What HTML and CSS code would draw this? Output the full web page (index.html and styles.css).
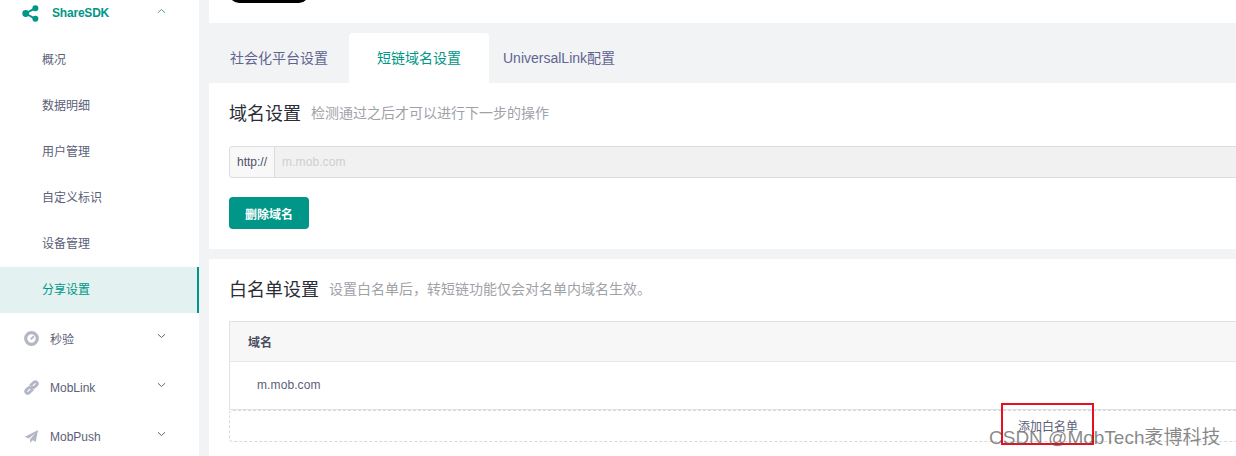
FILE: index.html
```html
<!DOCTYPE html>
<html lang="zh-CN">
<head>
<meta charset="utf-8">
<title>分享设置</title>
<link rel="stylesheet" href="styles.css">
</head>
<body>
<div class="app">
  <aside class="sidebar">
    <div class="group-head current">
      <svg class="gicon lead" viewBox="0 0 16 16"><path d="M12.500 3 3.500 8l9 5" fill="none" stroke="#009688" stroke-width="1.800"/><circle cx="3.500" cy="8" r="3.200" fill="#009688"/><circle cx="12.600" cy="3" r="2.800" fill="#009688"/><circle cx="12.600" cy="13" r="2.800" fill="#009688"/></svg>
      <span class="gname">ShareSDK</span>
      <svg class="chev" viewBox="0 0 10 6"><path d="M1 5 5 1.300 9 5" fill="none" stroke="#4a9d92" stroke-width="1.100"/></svg>
    </div>
    <a class="sub">概况</a>
    <a class="sub">数据明细</a>
    <a class="sub">用户管理</a>
    <a class="sub">自定义标识</a>
    <a class="sub">设备管理</a>
    <a class="sub active">分享设置</a>
    <div class="group">
      <svg class="gicon" viewBox="0 0 16 16"><circle cx="8" cy="8" r="6.200" fill="none" stroke="#b3b6c4" stroke-width="3.400"/><path d="M7.200 8.800 10.600 5.600" stroke="#b3b6c4" stroke-width="2"/></svg>
      <span class="gname-plain">秒验</span>
      <svg class="chev" viewBox="0 0 10 6"><path d="M1 1 5 4.700 9 1" fill="none" stroke="#5d6275" stroke-width="1.100"/></svg>
    </div>
    <div class="group latin">
      <svg class="gicon" viewBox="0 0 16 16"><path d="M6.500 7 2.500 10.500a2 2 0 0 0 3 3L9.500 9.800M9.500 9 13.500 5.500a2 2 0 0 0-3-3L6.500 6.200M6.500 9.500 9.500 6.500" fill="none" stroke="#b3b6c4" stroke-width="3"/></svg>
      <span class="gname-plain">MobLink</span>
      <svg class="chev" viewBox="0 0 10 6"><path d="M1 1 5 4.700 9 1" fill="none" stroke="#5d6275" stroke-width="1.100"/></svg>
    </div>
    <div class="group latin">
      <svg class="gicon" viewBox="0 0 16 16"><path d="M15 1 1 8.200l4 1.800L12 4.500 6.500 11v4l2.600-3 3.400 1.500z" fill="#b3b6c4"/></svg>
      <span class="gname-plain">MobPush</span>
      <svg class="chev" viewBox="0 0 10 6"><path d="M1 1 5 4.700 9 1" fill="none" stroke="#5d6275" stroke-width="1.100"/></svg>
    </div>
  </aside>
  <main class="main">
    <section class="top-card"><div class="black-btn"></div></section>
    <nav class="tabs">
      <a class="tab first">社会化平台设置</a>
      <a class="tab on">短链域名设置</a>
      <a class="tab last">UniversalLink配置</a>
    </nav>
    <section class="card domain">
      <div class="heading"><h2>域名设置</h2><p>检测通过之后才可以进行下一步的操作</p></div>
      <div class="input-group"><span class="prefix">http://</span><span class="field">m.mob.com</span></div>
      <button class="btn">删除域名</button>
    </section>
    <section class="card white">
      <div class="heading"><h2>白名单设置</h2><p>设置白名单后，转短链功能仅会对名单内域名生效。</p></div>
      <div class="table">
        <div class="th">域名</div>
        <div class="td">m.mob.com</div>
      </div>
      <div class="add">添加白名单</div>
    </section>
  </main>
</div>
<div class="redbox"></div>
<div class="watermark">CSDN @MobTech袤博科技</div>
</body>
</html>
```
FILE: styles.css
```css
* { box-sizing: border-box; }
html, body { margin: 0; height: 456px; overflow: hidden; }
body { font-family: "Liberation Sans", "Noto Sans CJK SC", sans-serif; font-size: 12px; color: #5b6078; background: #f2f3f5; position: relative; }
.app { display: flex; height: 456px; gap: 10px; }
.sidebar { width: 199px; flex: none; background: #fff; height: 456px; overflow: hidden; }
.group-head { display: flex; align-items: center; height: 26px; margin-bottom: 11px; padding-left: 22px; padding-right: 33px; }
.group { display: flex; align-items: center; height: 49px; padding-top: 1px; padding-left: 24px; padding-right: 33px; }
.gicon { width: 15px; height: 15px; flex: none; margin-right: 11px; }
.gicon.lead { width: 17px; height: 17px; margin-right: 13px; }
.gname { flex: 1; font-weight: 700; color: #009688; letter-spacing: -.2px; }
.gname-plain { flex: 1; color: #5b6078; }
.latin .gname-plain { padding-top: 2px; }
.chev { width: 9px; height: 6px; flex: none; margin-top: -4px; }
.sub { display: flex; align-items: center; height: 46px; padding-left: 42px; padding-bottom: 4px; color: #5b6078; }
.sub.active { background: #e3f2f0; color: #009688; border-right: 2px solid #009688; }
.main { flex: 1; min-width: 0; overflow: hidden; height: 456px; }
.top-card { height: 23px; background: #fff; padding-left: 20px; overflow: hidden; }
.black-btn { width: 80px; height: 32px; margin-top: -29px; background: #000; border-radius: 10px; }
.tabs { display: flex; height: 60px; align-items: flex-end; }
.tab { display: flex; align-items: center; justify-content: center; height: 50px; padding-bottom: 2px; font-size: 14px; color: #5f6590; }
.tab.first { width: 140px; }
.tab.on { width: 140px; background: #fff; color: #009688; border-radius: 4px 4px 0 0; }
.tab.last { padding-left: 14px; }
.card { background: #fff; padding-left: 20px; margin-right: -20px; }
.domain { height: 166px; margin-bottom: 10px; padding-top: 19px; }
.white { height: 197px; padding-top: 19px; }
.heading { display: flex; align-items: center; height: 20px; gap: 10px; }
.heading h2 { margin: 0; font-size: 18px; font-weight: 400; color: #2b2d36; }
.heading p { margin: 0; font-size: 14px; color: #a0a2a8; }
.input-group { display: flex; height: 32px; margin-top: 24px; border: 1px solid #dcdde3; border-radius: 4px; border-right: 0; }
.prefix { width: 45px; flex: none; display: flex; align-items: center; justify-content: center; background: #f8f8f8; border-right: 1px solid #dcdde3; border-radius: 4px 0 0 4px; color: #4d5068; }
.field { flex: 1; display: flex; align-items: center; padding-left: 7px; background: #f1f1f1; color: #cfcfcf; letter-spacing: .1px; }
.btn { display: block; width: 80px; height: 32px; margin-top: 19px; border: 0; padding: 0; border-radius: 4px; background: #009688; color: #fff; font: 700 12px "Liberation Sans", "Noto Sans CJK SC", sans-serif; }
.table { margin-top: 23px; height: 89px; border: 1px solid #e1e1e3; border-right: 0; }
.th { height: 40px; display: flex; align-items: center; padding-left: 18px; background: #f7f7f7; border-bottom: 1px solid #e8e8e8; font-weight: 700; color: #4a4d5e; }
.td { height: 47px; display: flex; align-items: center; padding-left: 27px; padding-bottom: 2px; letter-spacing: .1px; }
.add { height: 32px; border: 1px dashed #d9d9dd; border-right: 0; border-radius: 4px; display: flex; align-items: center; padding-left: 788px; padding-bottom: 2px; color: #5b6078; }
.redbox { position: absolute; left: 1001px; top: 403px; width: 93px; height: 42px; border: 2px solid #e8101e; }
.watermark { position: absolute; left: 989px; top: 426px; font-size: 19px; line-height: 23px; color: rgba(90,90,90,.72); white-space: nowrap; }
```
